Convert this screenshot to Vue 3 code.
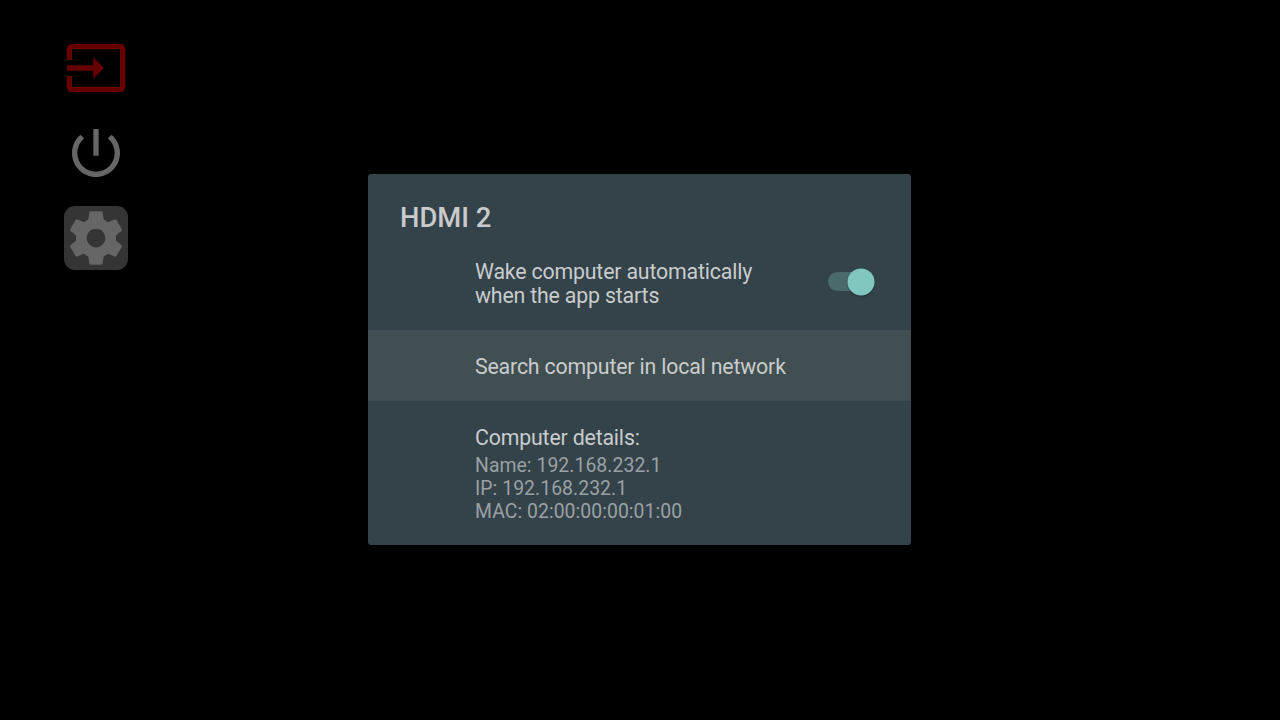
<template>
  <div class="screen">
    <nav class="sidebar">
      <button
        v-for="item in menu"
        :key="item.id"
        class="menu-btn"
        :class="[item.id, { focused: item.id === activeItem }]"
        :aria-label="item.label"
        @click="activeItem = item.id"
      >
        <svg class="menu-icon" viewBox="0 0 24 24">
          <path :d="item.icon" />
        </svg>
      </button>
    </nav>

    <section class="dialog">
      <h1 class="dialog-title">HDMI 2</h1>

      <div class="row wake-row" @click="wakeOnStart = !wakeOnStart">
        <p class="row-title">Wake computer automatically when the app starts</p>
        <div class="switch" :class="{ on: wakeOnStart }">
          <span class="switch-track"></span>
          <span class="switch-thumb"></span>
        </div>
      </div>

      <div class="row search-row">
        <p class="row-title">Search computer in local network</p>
      </div>

      <div class="row details-row">
        <p class="row-title">Computer details:</p>
        <p v-for="detail in details" :key="detail.label" class="row-summary">
          {{ detail.label }}: {{ detail.value }}
        </p>
      </div>
    </section>
  </div>
</template>

<script setup>
import { ref } from 'vue'

const activeItem = ref('settings')
const wakeOnStart = ref(true)

const menu = [
  {
    id: 'input',
    label: 'Input',
    icon: 'M21 3.01H3c-1.1 0-2 .9-2 2V9h2V4.99h18v14.03H3V15H1v4.01c0 1.1.9 1.98 2 1.98h18c1.1 0 2-.88 2-1.98v-14c0-1.11-.9-2-2-2zM11 16l4-4-4-4v3H1v2h10v3z',
  },
  {
    id: 'power',
    label: 'Power',
    icon: 'M13 3h-2v10h2V3zm4.83 2.17l-1.42 1.42C17.99 7.86 19 9.81 19 12c0 3.87-3.13 7-7 7s-7-3.13-7-7c0-2.19 1.01-4.14 2.58-5.42L6.17 5.17C4.23 6.82 3 9.26 3 12c0 4.97 4.03 9 9 9s9-4.03 9-9c0-2.74-1.23-5.18-3.17-6.83z',
  },
  {
    id: 'settings',
    label: 'Settings',
    icon: 'M19.43 12.98c.04-.32.07-.64.07-.98s-.03-.66-.07-.98l2.11-1.65c.19-.15.24-.42.12-.64l-2-3.46c-.12-.22-.39-.3-.61-.22l-2.49 1c-.52-.4-1.08-.73-1.69-.98l-.38-2.65C14.46 2.18 14.25 2 14 2h-4c-.25 0-.46.18-.49.42l-.38 2.65c-.61.25-1.17.59-1.69.98l-2.49-1c-.23-.09-.49 0-.61.22l-2 3.46c-.13.22-.07.49.12.64l2.11 1.65c-.04.32-.07.65-.07.98s.03.66.07.98l-2.11 1.65c-.19.15-.24.42-.12.64l2 3.46c.12.22.39.3.61.22l2.49-1c.52.4 1.08.73 1.69.98l.38 2.65c.03.24.24.42.49.42h4c.25 0 .46-.18.49-.42l.38-2.65c.61-.25 1.17-.59 1.69-.98l2.49 1c.23.09.49 0 .61-.22l2-3.46c.12-.22.07-.49-.12-.64l-2.11-1.65zM12 15.5c-1.93 0-3.5-1.57-3.5-3.5s1.57-3.5 3.5-3.5 3.5 1.57 3.5 3.5-1.57 3.5-3.5 3.5z',
  },
]

const details = [
  { label: 'Name', value: '192.168.232.1' },
  { label: 'IP', value: '192.168.232.1' },
  { label: 'MAC', value: '02:00:00:00:01:00' },
]
</script>

<style>
body {
  background: #000;
}
</style>

<style scoped>
.screen {
  display: grid;
  grid-template-columns: 304px 543px;
  box-sizing: border-box;
  width: 1280px;
  height: 720px;
  padding-left: 64px;
  background: #000;
  font-family: Roboto, sans-serif;
  overflow: hidden;
}

.sidebar {
  display: flex;
  flex-direction: column;
  align-items: flex-start;
  gap: 21px;
  padding-top: 36px;
}

.menu-btn {
  width: 64px;
  height: 64px;
  padding: 0;
  border: none;
  border-radius: 11px;
  background: none;
  color: #666;
  cursor: pointer;
}

.menu-btn.input {
  color: #660000;
}

.menu-btn.focused {
  background: #353535;
}

.menu-icon {
  display: block;
  width: 64px;
  height: 64px;
  fill: currentColor;
}

.dialog {
  box-sizing: border-box;
  height: 371px;
  margin-top: 174px;
  border-radius: 3px;
  background: #344249;
  overflow: hidden;
}

.dialog-title {
  margin: 0;
  padding: 28px 32px 0;
  font-size: 27.4px;
  font-weight: 500;
  line-height: 32px;
  color: #c8cacb;
}

.row {
  box-sizing: border-box;
  padding-left: 107px;
}

.row-title {
  margin: 0;
  font-size: 21.33px;
  line-height: 24px;
  letter-spacing: -0.18px;
  color: #c8cccd;
}

.wake-row {
  display: flex;
  justify-content: space-between;
  height: 96px;
  padding-top: 26px;
  padding-right: 36px;
}

.wake-row .row-title {
  width: 300px;
}

.switch {
  position: relative;
  width: 47px;
  height: 28px;
  margin-top: 8px;
}

.switch-track {
  position: absolute;
  top: 4px;
  left: 0;
  width: 43px;
  height: 19px;
  border-radius: 10px;
  background: #4a6a6c;
}

.switch-thumb {
  position: absolute;
  top: 0;
  left: 0;
  width: 27.4px;
  height: 27.4px;
  border-radius: 50%;
  background: #80c7c0;
  box-shadow: 0 1px 2px rgba(0, 0, 0, 0.35);
  transform: translateY(0.4px);
}

.switch.on .switch-thumb {
  transform: translate(19.5px, 0.4px);
}

.search-row {
  height: 71px;
  padding-top: 25px;
  background: #414f53;
}

.details-row {
  padding-top: 25px;
}

.details-row .row-title {
  margin-bottom: 4px;
}

.row-summary {
  margin: 0;
  font-size: 19.4px;
  line-height: 23px;
  letter-spacing: 0.05px;
  color: #9aa1a4;
}
</style>
